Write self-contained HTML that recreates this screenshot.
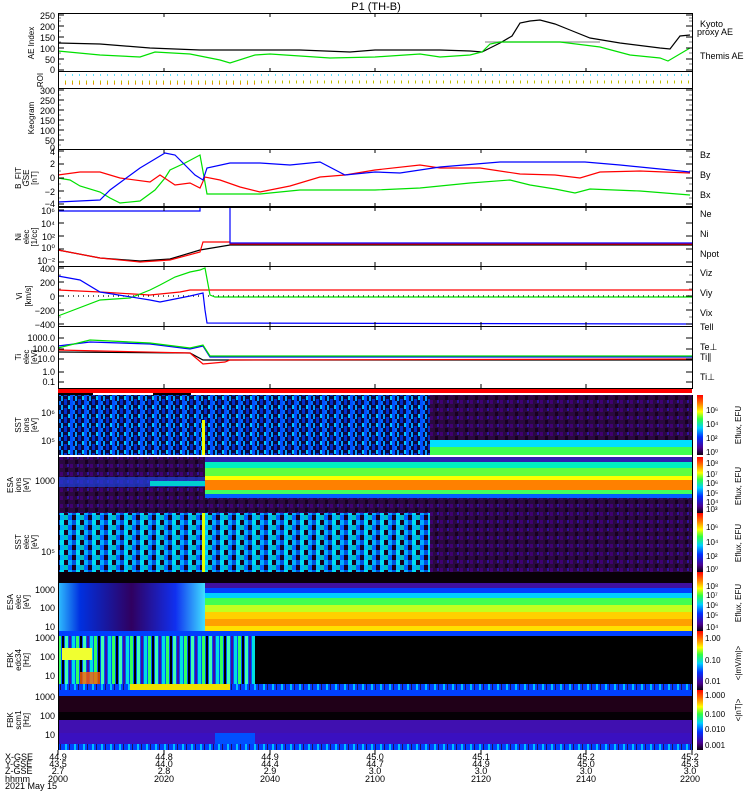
<!DOCTYPE html>
<html><head><meta charset="utf-8"><style>
html,body{margin:0;padding:0;background:#fff;width:750px;height:800px;overflow:hidden}
svg{display:block}
text{font-family:"Liberation Sans",sans-serif;fill:#000}
</style></head><body>
<svg width="750" height="800" viewBox="0 0 750 800" xmlns="http://www.w3.org/2000/svg" font-size="9">
<defs>
<linearGradient id="cb" x1="0" y1="1" x2="0" y2="0">
<stop offset="0" stop-color="#100010"/><stop offset="0.12" stop-color="#4a0090"/><stop offset="0.3" stop-color="#0030ff"/><stop offset="0.45" stop-color="#00d0ff"/><stop offset="0.6" stop-color="#30ff40"/><stop offset="0.72" stop-color="#ffff00"/><stop offset="0.85" stop-color="#ff8000"/><stop offset="1" stop-color="#ff0000"/>
</linearGradient>
<pattern id="sste" width="14" height="9" patternUnits="userSpaceOnUse">
<rect width="14" height="9" fill="#0a0a40"/>
<rect x="0" y="0" width="3" height="9" fill="#0050ff"/><rect x="5" y="0" width="2" height="5" fill="#00a0ff"/>
<rect x="8" y="3" width="3" height="6" fill="#0030d0"/><rect x="12" y="0" width="2" height="4" fill="#00c8ff"/>
<rect x="3" y="5" width="2" height="4" fill="#0070ff"/>
</pattern>
<pattern id="ssti" width="16" height="10" patternUnits="userSpaceOnUse">
<rect width="16" height="10" fill="#00b0ff"/>
<rect x="0" y="0" width="4" height="5" fill="#1a0020"/><rect x="8" y="5" width="4" height="5" fill="#1a0020"/>
<rect x="4" y="5" width="4" height="5" fill="#0060ff"/><rect x="12" y="0" width="4" height="5" fill="#00e0f0"/>
<rect x="8" y="0" width="4" height="5" fill="#0050e0"/><rect x="0" y="5" width="4" height="5" fill="#00c0c0"/>
</pattern>
<pattern id="purp" width="10" height="8" patternUnits="userSpaceOnUse">
<rect width="10" height="8" fill="#2a0a40"/>
<rect x="0" y="0" width="3" height="4" fill="#400070"/><rect x="5" y="4" width="3" height="4" fill="#180020"/>
<rect x="7" y="0" width="2" height="3" fill="#3010a0"/>
</pattern>
<pattern id="fbk" width="18" height="12" patternUnits="userSpaceOnUse">
<rect width="18" height="12" fill="#0050ff"/>
<rect x="0" y="0" width="3" height="12" fill="#00e0e0"/><rect x="4" y="0" width="3" height="12" fill="#30ff60"/>
<rect x="8" y="0" width="2" height="12" fill="#000"/><rect x="11" y="0" width="3" height="12" fill="#40ffb0"/>
<rect x="15" y="0" width="2" height="12" fill="#4010a0"/>
</pattern>
<pattern id="strip" width="9" height="6" patternUnits="userSpaceOnUse">
<rect width="9" height="6" fill="#0040ff"/><rect x="2" width="2" height="6" fill="#00c0ff"/><rect x="6" width="1" height="6" fill="#201060"/>
</pattern>
<linearGradient id="esaiL" x1="0" y1="0" x2="1" y2="0">
<stop offset="0" stop-color="#30c0ff"/><stop offset="0.15" stop-color="#0030e0"/><stop offset="0.5" stop-color="#300060"/><stop offset="0.8" stop-color="#1030f0"/><stop offset="1" stop-color="#40e0ff"/>
</linearGradient>
</defs>

<text x="376" y="10" text-anchor="middle" font-size="11">P1 (TH-B)</text>

<rect x="58" y="395" width="372" height="60" fill="url(#sste)"/>
<rect x="430" y="395" width="262" height="45" fill="url(#purp)"/>
<rect x="430" y="440" width="262" height="7" fill="#00e0ff"/>
<rect x="430" y="447" width="262" height="8" fill="#40ff50"/>
<rect x="202" y="420" width="3" height="35" fill="#f0ff00"/>
<rect x="58" y="457" width="147" height="56" fill="url(#purp)"/>
<rect x="58" y="477" width="147" height="10" fill="#2040e0" opacity="0.7"/>
<rect x="150" y="481" width="55" height="5" fill="#00d0d0"/>
<rect x="205" y="457" width="487" height="5" fill="#3020b0"/>
<rect x="205" y="462" width="487" height="6" fill="#00f0c0"/>
<rect x="205" y="468" width="487" height="8" fill="#60ff40"/>
<rect x="205" y="476" width="487" height="4" fill="#ffff00"/>
<rect x="205" y="480" width="487" height="10" fill="#ff8000"/>
<rect x="205" y="490" width="487" height="4" fill="#40ff60"/>
<rect x="205" y="494" width="487" height="4" fill="#0060ff"/>
<rect x="205" y="498" width="487" height="15" fill="url(#purp)"/>
<rect x="58" y="513" width="372" height="59" fill="url(#ssti)"/>
<rect x="430" y="513" width="262" height="59" fill="url(#purp)"/>
<rect x="202" y="513" width="3" height="59" fill="#e0ff00"/>
<rect x="58" y="572" width="634" height="11" fill="#080008"/>
<rect x="58" y="583" width="147" height="48" fill="url(#esaiL)"/>
<rect x="205" y="583" width="487" height="5" fill="#4010a0"/>
<rect x="205" y="588" width="487" height="5" fill="#0040ff"/>
<rect x="205" y="593" width="487" height="5" fill="#00d0ff"/>
<rect x="205" y="598" width="487" height="7" fill="#40ff50"/>
<rect x="205" y="605" width="487" height="7" fill="#c0ff20"/>
<rect x="205" y="612" width="487" height="7" fill="#ffd000"/>
<rect x="205" y="619" width="487" height="7" fill="#ffa000"/>
<rect x="205" y="626" width="487" height="5" fill="#ffe000"/>
<rect x="58" y="631" width="634" height="59" fill="#000"/>
<rect x="58" y="631" width="634" height="5" fill="#0040ff"/>
<rect x="58" y="636" width="197" height="48" fill="url(#fbk)"/>
<rect x="62" y="648" width="30" height="12" fill="#f0ff30"/>
<rect x="80" y="672" width="20" height="12" fill="#ff6000" opacity="0.8"/>
<rect x="58" y="684" width="634" height="6" fill="url(#strip)"/>
<rect x="130" y="684" width="100" height="6" fill="#f0e000"/>
<rect x="58" y="690" width="634" height="6" fill="#0040ff"/>
<rect x="58" y="696" width="634" height="16" fill="#200018"/>
<rect x="58" y="712" width="634" height="8" fill="#050005"/>
<rect x="58" y="720" width="634" height="13" fill="#4010b0"/>
<rect x="58" y="733" width="634" height="11" fill="#3a10c0"/>
<rect x="215" y="733" width="40" height="11" fill="#0050ff"/>
<rect x="58" y="744" width="634" height="6" fill="url(#strip)"/>

<rect x="58" y="389" width="634" height="4" fill="#ff0000"/>
<rect x="58" y="393" width="35" height="2" fill="#000"/><rect x="153" y="393" width="38" height="2" fill="#000"/>

<rect x="697" y="395" width="6" height="60" fill="url(#cb)"/>
<rect x="697" y="457" width="6" height="56" fill="url(#cb)"/>
<rect x="697" y="513" width="6" height="59" fill="url(#cb)"/>
<rect x="697" y="572" width="6" height="59" fill="url(#cb)"/>
<rect x="697" y="631" width="6" height="59" fill="url(#cb)"/>
<rect x="697" y="690" width="6" height="60" fill="url(#cb)"/>
<g font-size="8">
<text x="706" y="413">10⁶</text><text x="706" y="427">10⁴</text><text x="706" y="441">10²</text><text x="706" y="455">10⁰</text>
<text x="706" y="466">10⁸</text><text x="706" y="477">10⁷</text><text x="706" y="486">10⁶</text><text x="706" y="496">10⁵</text><text x="706" y="505">10⁴</text><text x="706" y="512">10³</text>
<text x="706" y="530">10⁶</text><text x="706" y="545">10⁴</text><text x="706" y="559">10²</text><text x="706" y="572">10⁰</text>
<text x="706" y="589">10⁸</text><text x="706" y="598">10⁷</text><text x="706" y="608">10⁶</text><text x="706" y="618">10⁵</text><text x="706" y="630">10⁴</text>
<text x="705" y="641">1.00</text><text x="705" y="663">0.10</text><text x="705" y="684">0.01</text>
<text x="705" y="698">1.000</text><text x="705" y="717">0.100</text><text x="705" y="732">0.010</text><text x="705" y="748">0.001</text>
</g>
<g font-size="8">
<text transform="translate(741,425) rotate(-90)" text-anchor="middle">Eflux, EFU</text>
<text transform="translate(741,486) rotate(-90)" text-anchor="middle">Eflux, EFU</text>
<text transform="translate(741,543) rotate(-90)" text-anchor="middle">Eflux, EFU</text>
<text transform="translate(741,603) rotate(-90)" text-anchor="middle">Eflux, EFU</text>
<text transform="translate(741,663) rotate(-90)" text-anchor="middle">&lt;|mV/m|&gt;</text>
<text transform="translate(741,710) rotate(-90)" text-anchor="middle">&lt;|nT|&gt;</text>
</g>

<g fill="none" stroke-width="1.2">
<polyline stroke="#999" points="485,42 600,42"/>
<polyline stroke="#000" points="58,43 100,44 150,48 200,50 300,50 350,52 375,50 400,50 440,50 470,51 482,52 490,48 500,43 512,36 520,23 530,21 540,20 555,24 570,30 590,38 620,43 660,48 670,49 680,36 690,35"/>
<polyline stroke="#00e000" points="58,51 100,55 140,57 155,52 190,54 220,60 230,63 255,55 270,54 330,58 375,57 420,54 440,57 470,55 482,52 490,44 500,42 560,42 600,47 630,55 660,58 668,61 690,48"/>
<line x1="58" y1="75" x2="692" y2="75" stroke="#00d0ff" stroke-dasharray="1 6"/>
<line x1="58" y1="82" x2="692" y2="82" stroke="#c0c000" stroke-width="3" stroke-dasharray="1 6"/>
<line x1="58" y1="84" x2="260" y2="84" stroke="#ff6000" stroke-dasharray="1 6"/>
<polyline stroke="#00e000" points="58,178 70,180 80,186 100,192 110,198 120,203 140,201 155,190 165,178 170,170 185,163 200,155 204,177 207,194 260,194 300,190 375,190 420,188 470,183 510,180 530,185 555,189 575,193 590,189 640,191 690,195"/>
<polyline stroke="#ff0000" points="58,175 80,172 100,172 120,178 150,182 160,175 175,185 190,183 200,188 205,177 220,180 240,187 260,192 290,186 320,177 345,175 375,170 420,165 440,168 480,168 520,174 555,175 580,178 600,172 640,171 690,173"/>
<polyline stroke="#0000ff" points="58,202 100,200 110,190 140,168 150,162 165,153 175,155 195,175 203,180 207,168 230,163 260,163 290,165 320,162 345,175 375,172 400,173 440,167 500,162 560,162 585,162 620,165 690,172"/>
<polyline stroke="#000" points="58,250 100,258 140,261 170,259 200,250 230,245 692,245"/>
<polyline stroke="#ff0000" points="58,250 100,258 140,262 170,260 200,252 203,242 230,242 230,244 692,244"/>
<polyline stroke="#0000ff" points="58,211 200,211 200,207 230,207 230,243 692,243"/>
<line x1="58" y1="296" x2="692" y2="296" stroke="#000" stroke-dasharray="1 4"/>
<polyline stroke="#ff0000" points="58,290 100,292 150,295 180,292 190,290 692,290"/>
<polyline stroke="#00e000" points="58,316 100,300 130,298 150,290 160,285 175,277 190,272 200,270 205,268 210,295 215,297 692,297"/>
<polyline stroke="#0000ff" points="58,276 80,280 100,292 150,300 160,302 190,296 203,293 205,310 207,323 692,324"/>
<polyline stroke="#000" points="58,352 190,353 203,360 692,360"/>
<polyline stroke="#ff0000" points="58,350 190,353 203,364 225,362 230,360 692,359"/>
<polyline stroke="#0000ff" points="58,346 90,342 150,344 190,349 203,346 210,357 692,357"/>
<polyline stroke="#00e000" points="58,348 90,340 150,343 190,348 203,345 210,356 692,356"/>
</g>

<g fill="none" stroke="#000" stroke-width="1">
<rect x="58.5" y="13.5" width="634" height="58"/>
<rect x="58.5" y="71.5" width="634" height="17"/>
<rect x="58.5" y="88.5" width="634" height="61"/>
<rect x="58.5" y="149.5" width="634" height="57"/>
<rect x="58.5" y="207.5" width="634" height="59"/>
<rect x="58.5" y="266.5" width="634" height="60"/>
<rect x="58.5" y="326.5" width="634" height="62"/>
<line x1="58.5" y1="395" x2="58.5" y2="750"/>
<line x1="692.5" y1="395" x2="692.5" y2="750"/>
</g>
<g stroke="#000">
<path d="M164,13v4M270,13v4M375,13v4M481,13v4M586,13v4M164,72v-4M270,72v-4M375,72v-4M481,72v-4M586,72v-4
M164,149v4M270,149v4M375,149v4M481,149v4M586,149v4M164,207v-4M270,207v-4M375,207v-4M481,207v-4M586,207v-4
M164,207v4M270,207v4M375,207v4M481,207v4M586,207v4M164,266v-4M270,266v-4M375,266v-4M481,266v-4M586,266v-4
M164,266v4M270,266v4M375,266v4M481,266v4M586,266v4M164,326v-4M270,326v-4M375,326v-4M481,326v-4M586,326v-4
M164,326v4M270,326v4M375,326v4M481,326v4M586,326v4M164,388v-4M270,388v-4M375,388v-4M481,388v-4M586,388v-4
M58,750v5M164,750v5M270,750v5M375,750v5M481,750v5M586,750v5M692,750v5"/>
<path d="M58,15h6M58,26h6M58,37h6M58,48h6M58,59h6M58,70h6M692,15h-6M692,26h-6M692,37h-6M692,48h-6M692,59h-6M692,70h-6
M58,90h6M58,100h6M58,110h6M58,120h6M58,130h6M58,140h6M692,90h-6M692,100h-6M692,110h-6M692,120h-6M692,130h-6M692,140h-6
M58,151h6M58,164h6M58,178h6M58,191h6M58,204h6M692,151h-6M692,164h-6M692,178h-6M692,191h-6M692,204h-6
M58,210h6M58,223h6M58,236h6M58,249h6M58,262h6M692,223h-6M692,236h-6M692,249h-6M692,262h-6
M58,268h6M58,282h6M58,296h6M58,310h6M58,324h6M692,282h-6M692,296h-6M692,310h-6M692,324h-6
M58,338h6M58,349h6M58,359h6M58,372h6M58,382h6M692,338h-6M692,349h-6M692,359h-6M692,372h-6M692,382h-6"/>
</g>
<g stroke="#000" stroke-width="0.6">
<path d="M58,18h3M58,21h3M58,31h3M58,42h3M58,53h3M58,64h3M692,18h-3M692,21h-3M692,31h-3M692,42h-3M692,53h-3M692,64h-3
M58,95h3M58,105h3M58,115h3M58,125h3M58,135h3M58,145h3M692,95h-3M692,105h-3M692,115h-3M692,125h-3M692,135h-3M692,145h-3
M58,157h3M58,171h3M58,184h3M58,198h3M692,157h-3M692,171h-3M692,184h-3M692,198h-3
M58,289h3M58,303h3M58,275h3M58,317h3M692,289h-3M692,303h-3M692,275h-3M692,317h-3"/>
</g>

<g text-anchor="end" font-size="9">
<text x="55" y="19">250</text><text x="55" y="30">200</text><text x="55" y="41">150</text><text x="55" y="52">100</text><text x="55" y="63">50</text><text x="55" y="73">0</text>
<text x="55" y="94">300</text><text x="55" y="104">250</text><text x="55" y="114">200</text><text x="55" y="124">150</text><text x="55" y="134">100</text><text x="55" y="144">50</text><text x="55" y="151">0</text>
<text x="55" y="155">4</text><text x="55" y="167">2</text><text x="55" y="181">0</text><text x="55" y="195">−2</text><text x="55" y="207">−4</text>
<text x="55" y="214">10⁶</text><text x="55" y="227">10⁴</text><text x="55" y="240">10²</text><text x="55" y="251">10⁰</text><text x="55" y="264">10⁻²</text>
<text x="55" y="272">400</text><text x="55" y="286">200</text><text x="55" y="300">0</text><text x="55" y="314">−200</text><text x="55" y="328">−400</text>
<text x="55" y="341">1000.0</text><text x="55" y="352">100.0</text><text x="55" y="362">10.0</text><text x="55" y="375">1.0</text><text x="55" y="385">0.1</text>
<text x="55" y="416">10⁶</text><text x="55" y="444">10⁵</text>
<text x="55" y="484">1000</text>
<text x="55" y="555">10⁵</text>
<text x="55" y="593">1000</text><text x="55" y="611">100</text><text x="55" y="630">10</text>
<text x="55" y="641">1000</text><text x="55" y="660">100</text><text x="55" y="679">10</text>
<text x="55" y="700">1000</text><text x="55" y="719">100</text><text x="55" y="738">10</text>
</g>
<g text-anchor="middle" font-size="8">
<text transform="translate(34,43) rotate(-90)">AE Index</text>
<text transform="translate(43,80) rotate(-90)">ROI</text>
<text transform="translate(34,118) rotate(-90)">Keogram</text>
<text transform="translate(21,178) rotate(-90)">B_FIT</text>
<text transform="translate(29,178) rotate(-90)">GSE</text>
<text transform="translate(37,178) rotate(-90)">[nT]</text>
<text transform="translate(21,237) rotate(-90)">Ni</text>
<text transform="translate(29,237) rotate(-90)">elec</text>
<text transform="translate(37,237) rotate(-90)">[1/cc]</text>
<text transform="translate(22,296) rotate(-90)">Vi</text>
<text transform="translate(31,296) rotate(-90)">[km/s]</text>
<text transform="translate(21,357) rotate(-90)">Ti</text>
<text transform="translate(29,357) rotate(-90)">elec</text>
<text transform="translate(37,357) rotate(-90)">[eV]</text>
<text transform="translate(21,425) rotate(-90)">SST</text><text transform="translate(29,425) rotate(-90)">ions</text><text transform="translate(37,425) rotate(-90)">[eV]</text>
<text transform="translate(13,485) rotate(-90)">ESA</text><text transform="translate(21,485) rotate(-90)">ions</text><text transform="translate(29,485) rotate(-90)">[eV]</text>
<text transform="translate(21,542) rotate(-90)">SST</text><text transform="translate(29,542) rotate(-90)">elec</text><text transform="translate(37,542) rotate(-90)">[eV]</text>
<text transform="translate(13,602) rotate(-90)">ESA</text><text transform="translate(21,602) rotate(-90)">elec</text><text transform="translate(29,602) rotate(-90)">[eV]</text>
<text transform="translate(13,660) rotate(-90)">FBK</text><text transform="translate(21,660) rotate(-90)">edc34</text><text transform="translate(29,660) rotate(-90)">[Hz]</text>
<text transform="translate(13,720) rotate(-90)">FBK</text><text transform="translate(21,720) rotate(-90)">scm1</text><text transform="translate(29,720) rotate(-90)">[Hz]</text>
</g>
<g font-size="9">
<text x="700" y="27" fill="#00e000">Kyoto</text><text x="697" y="35" fill="#00e000">proxy AE</text>
<text x="700" y="59">Themis AE</text>
<text x="700" y="158" fill="#ff0000">Bz</text><text x="700" y="178" fill="#00e000">By</text><text x="700" y="198" fill="#0000ff">Bx</text>
<text x="700" y="217" fill="#ff0000">Ne</text><text x="700" y="237">Ni</text><text x="700" y="257" fill="#0000ff">Npot</text>
<text x="700" y="276" fill="#ff0000">Viz</text><text x="700" y="296" fill="#00e000">Viy</text><text x="700" y="316" fill="#0000ff">Vix</text>
<text x="700" y="330">Tell</text><text x="700" y="350" fill="#ff0000">Te⊥</text><text x="700" y="360" fill="#00e000">Ti∥</text><text x="700" y="380" fill="#0000ff">Ti⊥</text>
</g>
<g font-size="9">
<text x="5" y="760">X-GSE</text><text x="5" y="767">Y-GSE</text><text x="5" y="774">Z-GSE</text><text x="5" y="782">hhmm</text><text x="5" y="789">2021 May 15</text>
</g>
<g font-size="9" text-anchor="middle">
<text x="58" y="760">44.9</text><text x="58" y="767">43.5</text><text x="58" y="774">2.7</text><text x="58" y="782">2000</text>
<text x="164" y="760">44.8</text><text x="164" y="767">44.0</text><text x="164" y="774">2.8</text><text x="164" y="782">2020</text>
<text x="270" y="760">44.9</text><text x="270" y="767">44.4</text><text x="270" y="774">2.9</text><text x="270" y="782">2040</text>
<text x="375" y="760">45.0</text><text x="375" y="767">44.7</text><text x="375" y="774">3.0</text><text x="375" y="782">2100</text>
<text x="481" y="760">45.1</text><text x="481" y="767">44.9</text><text x="481" y="774">3.0</text><text x="481" y="782">2120</text>
<text x="586" y="760">45.2</text><text x="586" y="767">45.0</text><text x="586" y="774">3.0</text><text x="586" y="782">2140</text>
<text x="690" y="760">45.2</text><text x="690" y="767">45.3</text><text x="690" y="774">3.0</text><text x="690" y="782">2200</text>
</g>
</svg>
</body></html>
